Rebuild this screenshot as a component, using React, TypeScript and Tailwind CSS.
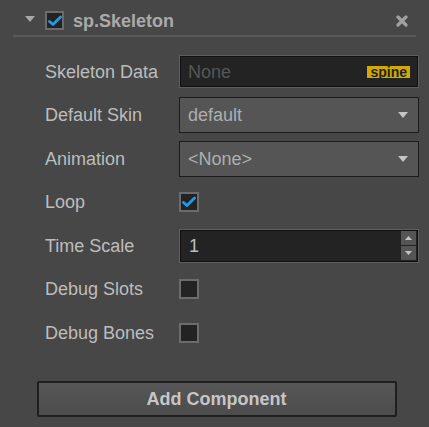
const Check = () => (
  <svg width="14" height="12" viewBox="0 0 14 12" aria-hidden="true">
    <path d="M1.5 6.5 L5 9.5 L12.5 2" fill="none" stroke="#1e9ce8" strokeWidth="2.8" strokeLinecap="round" strokeLinejoin="round" />
  </svg>
);

const CheckBox = ({ checked, size = "w-[20px] h-[20px]" }: { checked?: boolean; size?: string }) => (
  <div className={`${size} flex items-center justify-center border-2 border-[#6c6c6c] bg-[#232323]`}>
    {checked && <Check />}
  </div>
);

const Caret = () => (
  <svg width="10" height="6" viewBox="0 0 10 6" aria-hidden="true">
    <path d="M0 0 H10 L5 6 Z" fill="#c4c4c4" />
  </svg>
);

const Row = ({ label, children }: { label: string; children: React.ReactNode }) => (
  <div className="flex items-center h-[43.5px]">
    <span className="w-[134px] shrink-0 text-[#bdbdbd]">{label}</span>
    {children}
  </div>
);

const Select = ({ value }: { value: string }) => (
  <div className="flex items-center justify-between w-[240px] h-[36px] border border-[#1c1c1c] bg-[#555555] pl-[8px] pr-[10px] text-[#aeaeae]">
    <span>{value}</span>
    <Caret />
  </div>
);

export default function App() {
  return (
    <div
      className="w-[429px] h-[427px] bg-[#474747] text-[18px] leading-none"
      style={{ fontFamily: "'Liberation Sans', Arial, sans-serif" }}
    >
      <div className="mx-[13px] flex items-center h-[37px] border-b-2 border-[#5a5a5a]">
        <svg width="10" height="6" viewBox="0 0 10 6" className="ml-[12px] mt-[2px]" aria-hidden="true">
          <path d="M0 0 H10 L5 6 Z" fill="#a8a8a8" />
        </svg>
        <div className="ml-[10px] mt-[6px]">
          <CheckBox checked size="w-[19px] h-[19px]" />
        </div>
        <span className="ml-[9px] mt-[6px] font-bold text-[#aaaaaa]">sp.Skeleton</span>
        <svg width="12" height="12" viewBox="0 0 12 12" className="ml-auto mr-[8px] mt-[6px]" aria-hidden="true">
          <path d="M2 2 L10 10 M10 2 L2 10" stroke="#a0a0a0" strokeWidth="3.2" strokeLinecap="round" />
        </svg>
      </div>

      <div className="pl-[45px] mt-[13px]">
        <Row label="Skeleton Data">
          <div className="flex items-center justify-between w-[240px] h-[33px] border border-[#5e5e5e] bg-[#232323] pl-[8px] pr-[8px] shadow-[inset_0_0_0_1px_#111]">
            <span className="text-[#565656]">None</span>
            <span className="bg-[#d3a900] text-[#222] text-[14px] font-bold px-[3px] h-[12px] flex items-center">spine</span>
          </div>
        </Row>
        <Row label="Default Skin">
          <Select value="default" />
        </Row>
        <Row label="Animation">
          <Select value="<None>" />
        </Row>
        <Row label="Loop">
          <CheckBox checked />
        </Row>
        <Row label="Time Scale">
          <div className="flex items-center justify-between w-[240px] h-[34px] border border-[#5e5e5e] bg-[#232323] pl-[9px] pr-[2px] shadow-[inset_0_0_0_1px_#111] text-[#bdbdbd]">
            <span>1</span>
            <div className="flex flex-col gap-[1px]">
              <div className="w-[15px] h-[14px] bg-[#555] flex items-center justify-center">
                <svg width="7" height="4" viewBox="0 0 7 4" aria-hidden="true"><path d="M0 4 H7 L3.5 0 Z" fill="#c4c4c4" /></svg>
              </div>
              <div className="w-[15px] h-[14px] bg-[#555] flex items-center justify-center">
                <svg width="7" height="4" viewBox="0 0 7 4" aria-hidden="true"><path d="M0 0 H7 L3.5 4 Z" fill="#c4c4c4" /></svg>
              </div>
            </div>
          </div>
        </Row>
        <Row label="Debug Slots">
          <CheckBox />
        </Row>
        <Row label="Debug Bones">
          <CheckBox />
        </Row>
      </div>

      <div className="flex justify-center mt-[26px] pl-[4px]">
        <button
          type="button"
          className="w-[360px] h-[36px] rounded-[2px] border-2 border-[#1f1f1f] bg-gradient-to-b from-[#575757] to-[#4c4c4c] text-[18px] font-bold text-[#c6c6c6]"
        >
          Add Component
        </button>
      </div>
    </div>
  );
}
